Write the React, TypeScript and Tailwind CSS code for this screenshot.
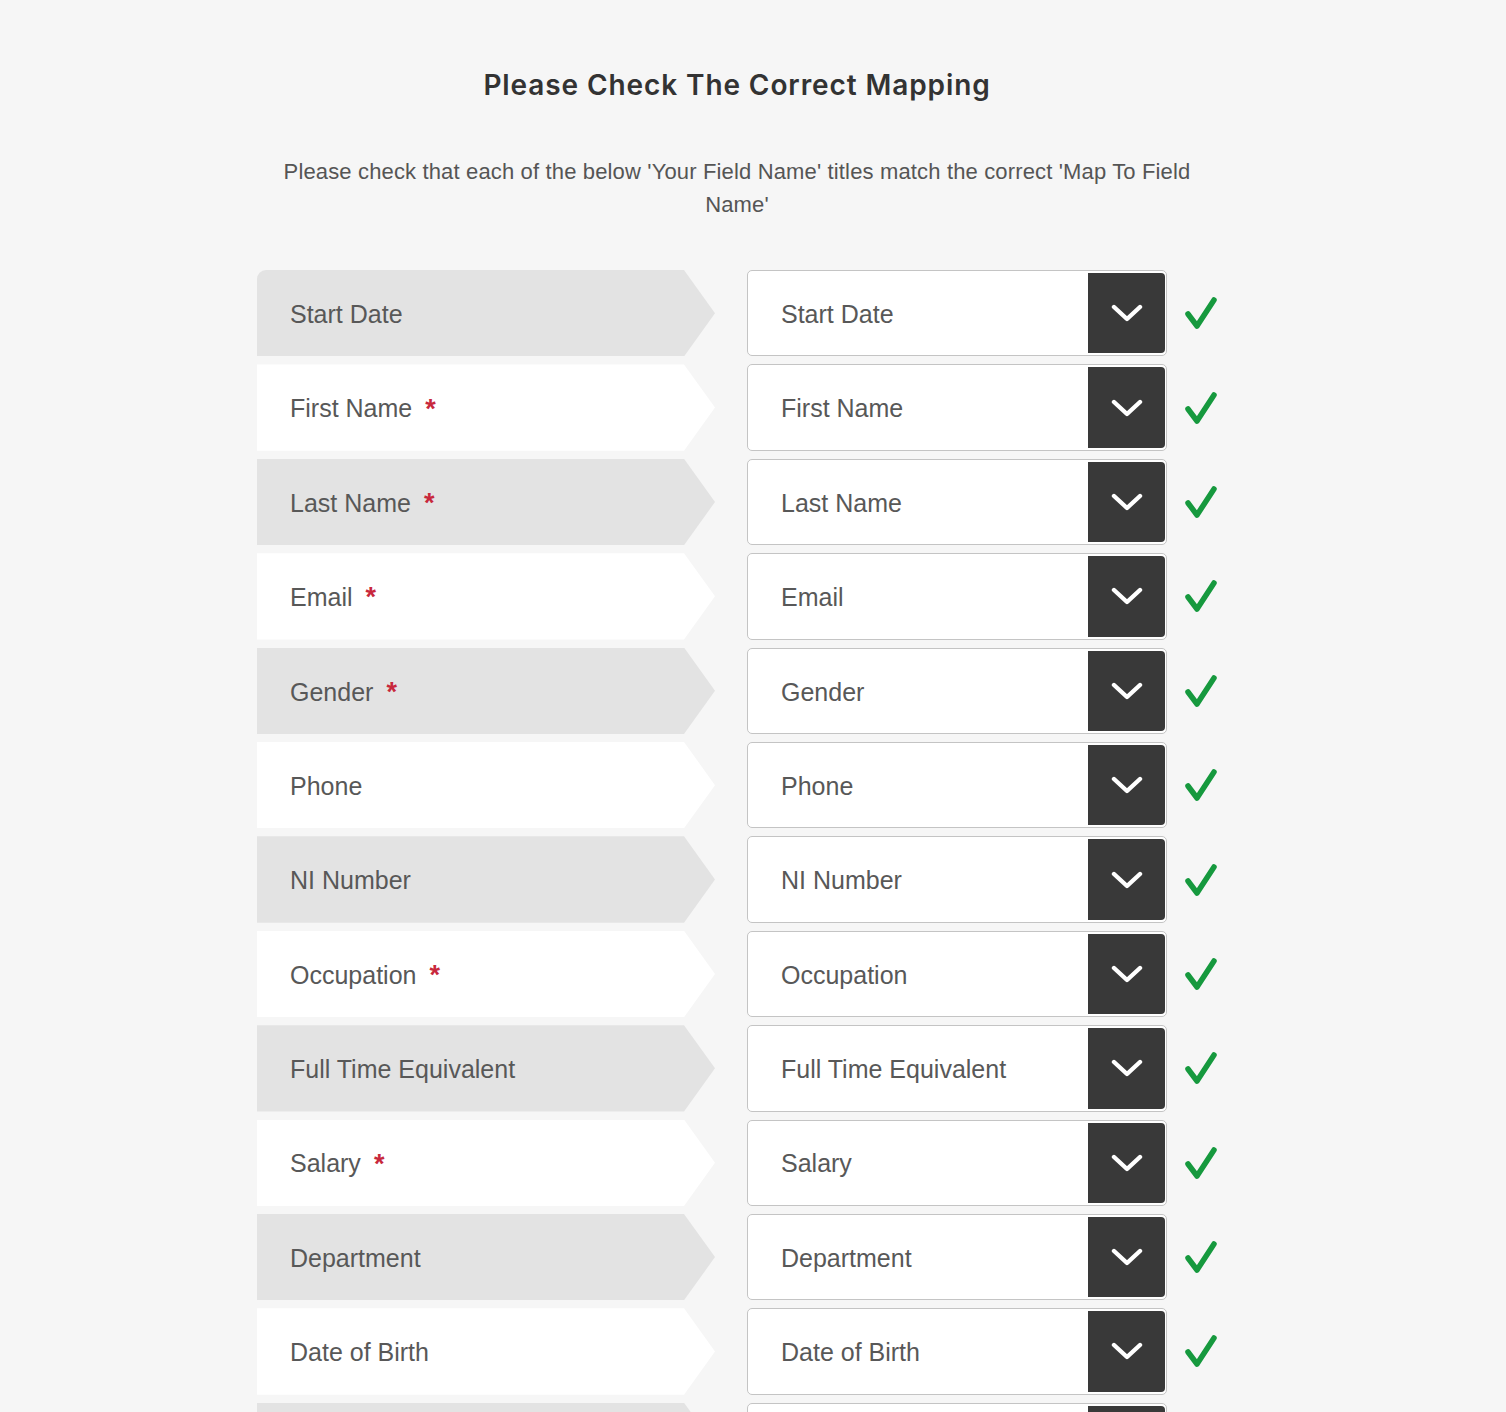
import { Fragment } from "react";

// ── Data ──────────────────────────────────────────────────────────────────────
type Mapping = { label: string; required?: boolean; mapTo: string };

const MAPPINGS: Mapping[] = [
  { label: "Start Date", mapTo: "Start Date" },
  { label: "First Name", required: true, mapTo: "First Name" },
  { label: "Last Name", required: true, mapTo: "Last Name" },
  { label: "Email", required: true, mapTo: "Email" },
  { label: "Gender", required: true, mapTo: "Gender" },
  { label: "Phone", mapTo: "Phone" },
  { label: "NI Number", mapTo: "NI Number" },
  { label: "Occupation", required: true, mapTo: "Occupation" },
  { label: "Full Time Equivalent", mapTo: "Full Time Equivalent" },
  { label: "Salary", required: true, mapTo: "Salary" },
  { label: "Department", mapTo: "Department" },
  { label: "Date of Birth", mapTo: "Date of Birth" },
  { label: "", mapTo: "" },
];

const font = "font-['Liberation_Sans',Arial,sans-serif]";

export default function App() {
  return (
    <div className={`h-[1412px] overflow-hidden bg-[#f6f6f6] ${font}`}>
      <main className="ml-[257px] w-[960px] pt-[67px] pb-10">
        {/* Header */}
        <h1 className="text-center text-[28px] leading-[36px] font-semibold tracking-[0.9px] text-[#333] font-['Inter',sans-serif]">
          Please Check The Correct Mapping
        </h1>
        <p className="mx-auto mt-[52px] w-[930px] text-center text-[22px] leading-[33px] tracking-[0.15px] text-[#555]">
          Please check that each of the below 'Your Field Name' titles match the correct 'Map To Field Name'
        </p>

        <div className="mt-[49px] flex flex-col gap-[8px]">
          {MAPPINGS.map((m, i) => (
            <Fragment key={i}>
              <Row mapping={m} shaded={i % 2 === 0} first={i === 0} />
            </Fragment>
          ))}
        </div>
      </main>
    </div>
  );
}

function Row({ mapping, shaded, first }: { mapping: Mapping; shaded: boolean; first: boolean }) {
  return (
    <div className="flex h-[86.4px] shrink-0 items-stretch">
      {/* Your field name */}
      <div
        className={`flex w-[458px] items-center pl-[33px] pt-[3px] text-[25px] text-[#585858] [clip-path:polygon(0_0,calc(100%_-_31px)_0,100%_50%,calc(100%_-_31px)_100%,0_100%)] ${
          shaded ? "bg-[#e3e3e3]" : "bg-white"
        } ${first ? "rounded-tl-[9px]" : ""}`}
      >
        <span>{mapping.label}</span>
        {mapping.required && (
          <span className="ml-[13px] text-[27px] font-bold leading-none text-[#c8283c]">*</span>
        )}
      </div>

      {/* Map to field */}
      <div className="ml-[32px] flex w-[420px] items-stretch rounded-[5px] border border-[#c4c4c4] bg-white">
        <div className="flex flex-1 items-center pl-[33px] pt-[3px] text-[25px] text-[#585858]">{mapping.mapTo}</div>
        <div className="my-[2px] mr-[1px] flex w-[77px] items-center justify-center rounded-r-[4px] bg-[#393939]">
          <svg width="32" height="20" viewBox="0 0 32 20" fill="none">
            <path d="M3 4 L16 16 L29 4" stroke="#fff" strokeWidth="4.4" strokeLinecap="round" strokeLinejoin="round" />
          </svg>
        </div>
      </div>

      {/* Status */}
      <div className="ml-[18px] flex w-[32px] items-center justify-center">
        <svg width="36" height="36" viewBox="0 0 36 36" fill="none" className="shrink-0">
          <path d="M5 19 L14 31 L31 5" stroke="#16993e" strokeWidth="5.5" strokeLinecap="round" strokeLinejoin="round" />
        </svg>
      </div>
    </div>
  );
}
